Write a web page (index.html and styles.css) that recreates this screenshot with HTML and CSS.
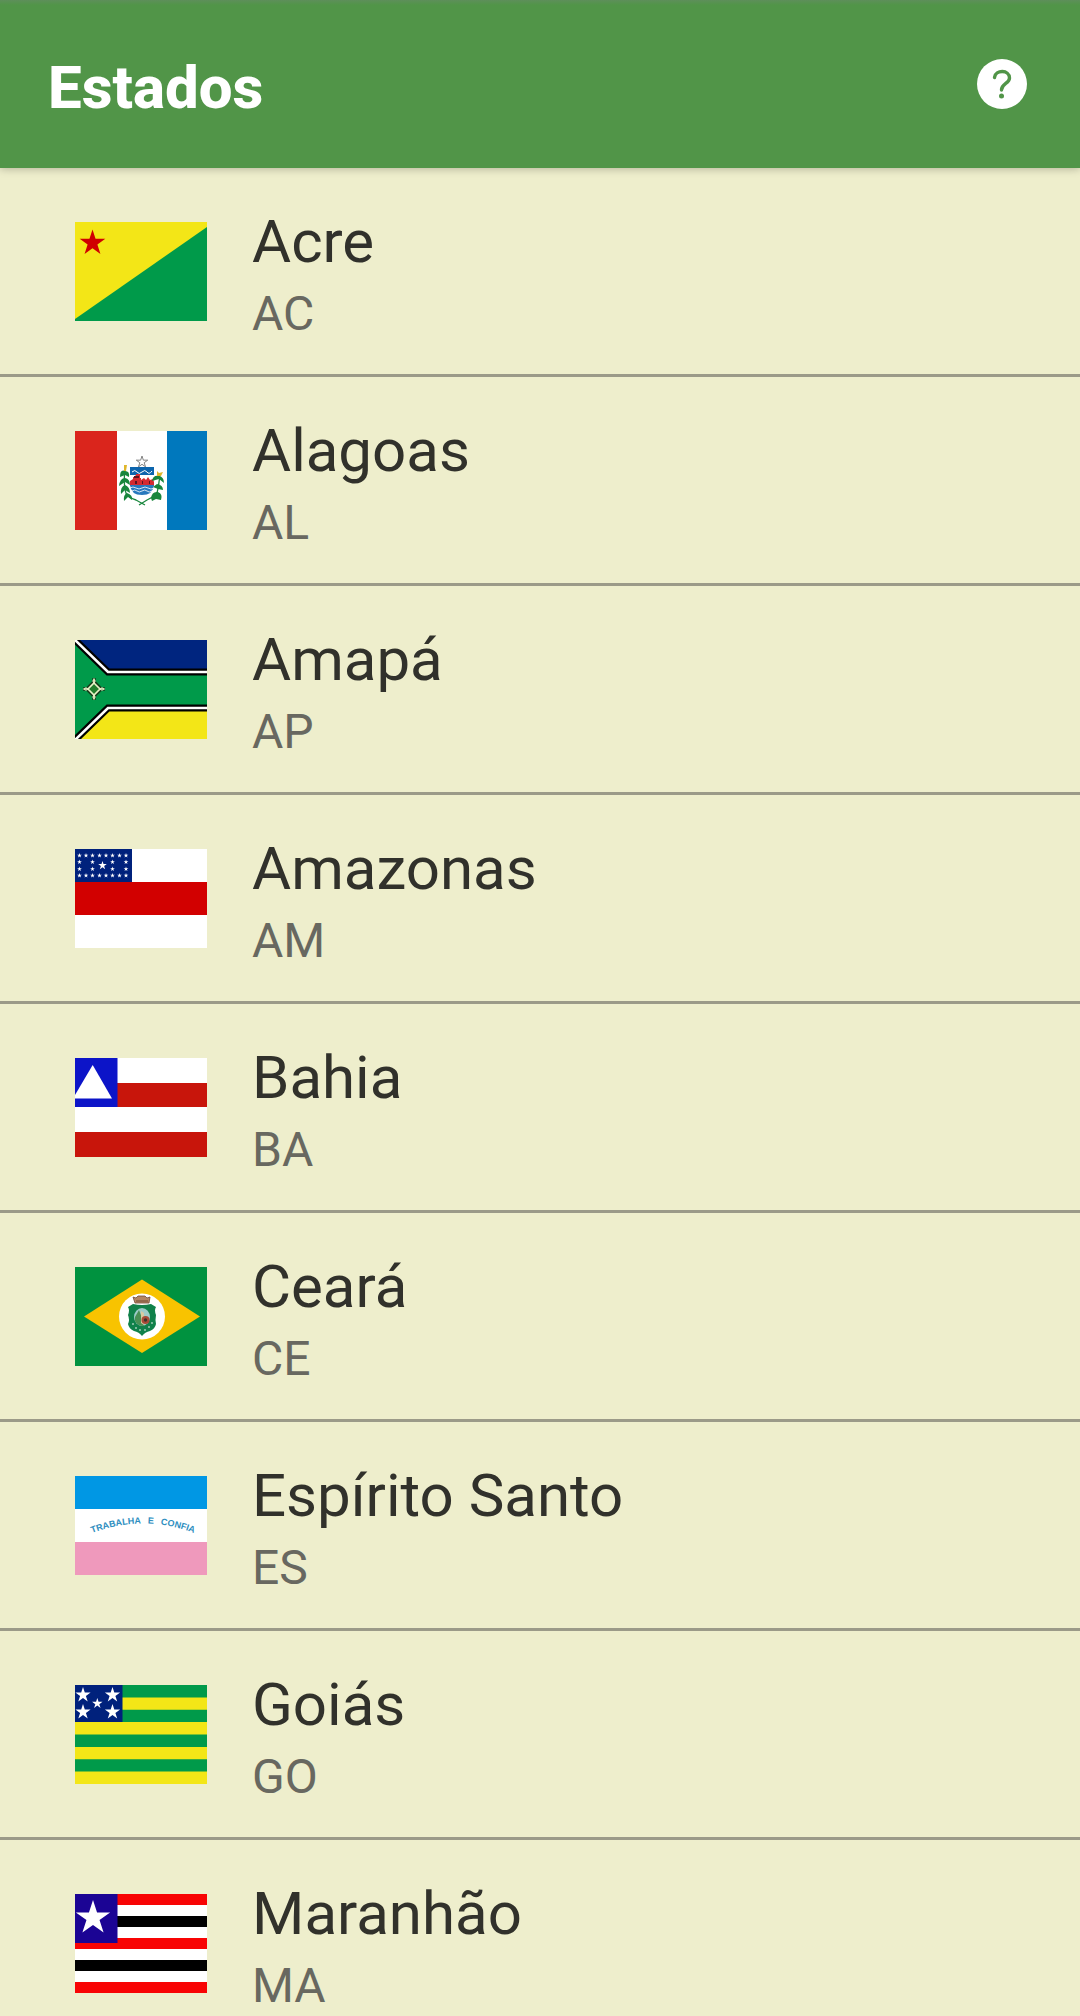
FILE: index.html
```
<!DOCTYPE html>
<html lang="pt-BR">
<head>
<meta charset="utf-8">
<meta name="viewport" content="width=device-width, initial-scale=1">
<title>Estados</title>
<link rel="stylesheet" href="styles.css">
</head>
<body>
<svg class="defs" aria-hidden="true">
  <symbol id="star" viewBox="-10 -10 20 20" overflow="visible">
    <path d="M0-10 2.25-3.09H9.51L3.63 1.18 5.88 8.09 0 3.82-5.88 8.09-3.63 1.18-9.51-3.09H-2.25Z"/>
  </symbol>
</svg>

<header class="app-bar">
  <h1 class="app-title">Estados</h1>
  <button class="help" type="button" aria-label="Ajuda">
    <svg class="help-icon" viewBox="0 0 50 50" aria-hidden="true">
      <circle cx="25" cy="25" r="25" fill="#fff"/>
      <path d="M17.500 18.500C18.500 10.500 32.500 10.500 32.500 19C32.500 24.500 24.500 24.500 24.500 31" fill="none" stroke="#519548" stroke-width="3.400" stroke-linecap="round"/>
      <circle cx="24.500" cy="37" r="2.500" fill="#519548"/>
    </svg>
  </button>
</header>

<main>
<ul class="states">
  <li><a class="state" href="#ac">
    <svg class="flag" viewBox="0 0 132 99" aria-hidden="true">
      <path fill="#f3e617" d="M0 0h132v99H0z"/>
      <path fill="#009a4a" d="M0 97 132 5v94H0z"/>
      <use href="#star" x="4" y="7.500" width="27" height="27" fill="#d00000"/>
    </svg>
    <span class="text"><span class="name">Acre</span><span class="code">AC</span></span>
  </a></li>

  <li><a class="state" href="#al">
    <svg class="flag" viewBox="0 0 132 99" aria-hidden="true">
      <path fill="#fff" d="M0 0h132v99H0z"/>
      <path fill="#da251c" d="M0 0h42v99H0z"/>
      <path fill="#0078bd" d="M92 0h40v99H92z"/>
      <use href="#star" x="61" y="25" width="12" height="12" fill="#fff" stroke="#777" stroke-width="1.500"/>
      <path fill="#0d65ad" d="M55 36h24v8H55z"/>
      <path stroke="#fff" fill="none" d="M57 41q3-3 5 0t5 0 5 0 5-1"/>
      <path fill="#d42a30" d="M55 53v-3l3-2v-2h2v-1l1-1v-1h4v4h1v2l3-2 2 2 2-3 2 3 3-1 1 3v4H55z"/>
      <path fill="#5b1420" d="M59 45h5v2h-5zM60 50h2v3h-2zM67 50h1v3h-1zM74 50h1v3h-1z"/>
      <path fill="#2878bd" d="M55 54h24q-1 10-12 10T55 54z"/>
      <path stroke="#fff" stroke-width=".8" fill="none" d="M55 57q3-2 6 0t6 0 6 0 6 0M57 60q3-2 5 0t5 0 5 0 5 0"/>
      <path stroke="#18863c" stroke-width="1.300" fill="none" d="M50 36q-2 22 2 28 5 4 9 5l9 5M85 42q-1 12-3 20-5 5-10 7l-8 5"/>
      <path fill="#18863c" d="M50 40q-5-2-5 6l5-2 4 2q1-6-4-6zM50 47q-5 0-6 8l6-4 5 3q0-6-5-7zM50 54q-5 2-4 9l4-4 5 3q0-6-5-8zM52 62q-4 2-3 8l4-4 4 3q1-5-5-7zM84 45q-6-1-7 5l7-2 5 4q0-6-5-7zM82 53q6 1 6 6l-5-1-5-2zM76 67q1-7 7-6 5 2 3 8l-5-1-4 2z"/>
      <path fill="#e0b62b" d="M49 34h3l-1 6h-2zM82 40l2 2 4-1-2 4-4 0z"/>
    </svg>
    <span class="text"><span class="name">Alagoas</span><span class="code">AL</span></span>
  </a></li>

  <li><a class="state" href="#ap">
    <svg class="flag" viewBox="0 0 132 99" aria-hidden="true">
      <path fill="#009a4a" d="M0 0h132v99H0z"/>
      <path fill="#00257f" d="M0 0h132v32H33z"/>
      <path fill="#f3e617" d="M3 99 33 69h99v30z"/>
      <g fill="none">
        <path stroke="#000" stroke-width="7" d="M-1-1 33 32h99M0 100 33 68h99"/>
        <path stroke="#fff" stroke-width="2.600" d="M-1-1 33 32h99M0 100 33 68h99"/>
        <path stroke="#163d1b" stroke-width="3.500" d="m19 42 7 7-7 7-7-7zM19 38v5M19 55v5M8 49h5M25 49h5"/>
        <path stroke="#e8f3c8" stroke-width="1.600" fill="#217d2c" d="m19 43 6 6-6 6-6-6z"/>
        <path stroke="#e8f3c8" stroke-width="1.200" d="m19 43-1-2 1-2 1 2zM19 55l-1 2 1 2 1-2zM13 49l-2-1-2 1 2 1zM25 49l2-1 2 1-2 1z"/>
      </g>
    </svg>
    <span class="text"><span class="name">Amapá</span><span class="code">AP</span></span>
  </a></li>

  <li><a class="state" href="#am">
    <svg class="flag" viewBox="0 0 132 99" aria-hidden="true">
      <path fill="#fff" d="M0 0h132v99H0z"/>
      <path fill="#d20000" d="M0 33h132v33H0z"/>
      <path fill="#00217c" d="M0 0h57v33H0z"/>
      <g fill="#fff">
        <g id="am-row">
          <use href="#star" x="2" y="4" width="5" height="5"/>
          <use href="#star" x="8.500" y="4" width="5" height="5"/>
          <use href="#star" x="15" y="4" width="5" height="5"/>
          <use href="#star" x="22" y="4" width="5" height="5"/>
          <use href="#star" x="28.500" y="4" width="5" height="5"/>
          <use href="#star" x="35" y="4" width="5" height="5"/>
          <use href="#star" x="42" y="4" width="5" height="5"/>
          <use href="#star" x="48.500" y="4" width="5" height="5"/>
        </g>
        <use href="#am-row" y="20"/>
        <g id="am-sides">
          <use href="#star" x="2" y="10.500" width="5" height="5"/>
          <use href="#star" x="15" y="10.500" width="5" height="5"/>
          <use href="#star" x="35" y="10.500" width="5" height="5"/>
          <use href="#star" x="48.500" y="10.500" width="5" height="5"/>
        </g>
        <use href="#am-sides" y="7"/>
        <use href="#star" x="23" y="12" width="9" height="9"/>
      </g>
    </svg>
    <span class="text"><span class="name">Amazonas</span><span class="code">AM</span></span>
  </a></li>

  <li><a class="state" href="#ba">
    <svg class="flag" viewBox="0 0 132 99" aria-hidden="true">
      <path fill="#fff" d="M0 0h132v99H0z"/>
      <path fill="#c8150b" d="M0 25h132v24H0zM0 74h132v25H0z"/>
      <path fill="#0c14c8" d="M0 0h42.500v49H0z"/>
      <path fill="#fff" d="M17.700 7 37 40.500H0V37z"/>
    </svg>
    <span class="text"><span class="name">Bahia</span><span class="code">BA</span></span>
  </a></li>

  <li><a class="state" href="#ce">
    <svg class="flag" viewBox="0 0 132 99" aria-hidden="true">
      <path fill="#00923f" d="M0 0h132v99H0z"/>
      <path fill="#f8c300" d="M9 49.500 67 12.500l58 37L67 86z"/>
      <circle cx="67" cy="49.500" r="23" fill="#fff"/>
      <path fill="#b58561" stroke="#6e4a38" stroke-width=".8" d="M58 30l3 1 2-2h7l2 2 3-1-1 6H60z"/>
      <path stroke="#6e4a38" fill="none" d="M61 34h12"/>
      <path fill="#10814a" d="M58 37q9 2 18 0l5 3q-2 3 0 8-1 5 0 9-1 5-6 7-5 1-8 5-3-4-8-5-5-2-6-7 2-4 0-9 2-5 0-8z"/>
      <ellipse cx="67" cy="50" rx="8" ry="9" fill="#9ecbc8"/>
      <path fill="#4b8f54" d="M60 50l4-7 3 8 2 8q-7 0-9-5z"/>
      <path fill="#d8c9a0" d="M66 44l3 2v12l-3-2z"/>
      <circle cx="70.500" cy="53" r="4" fill="#a84936"/>
      <circle cx="70.500" cy="53" r="1.700" fill="#3f332b"/>
      <g fill="#fff"><circle cx="58" cy="57" r=".8"/><circle cx="61" cy="61" r=".8"/><circle cx="65" cy="63" r=".8"/><circle cx="70" cy="63" r=".8"/><circle cx="74" cy="60" r=".8"/><circle cx="77" cy="56" r=".8"/></g>
    </svg>
    <span class="text"><span class="name">Ceará</span><span class="code">CE</span></span>
  </a></li>

  <li><a class="state" href="#es">
    <svg class="flag" viewBox="0 0 132 99" aria-hidden="true">
      <path fill="#fff" d="M0 0h132v99H0z"/>
      <path fill="#0097e4" d="M0 0h132v33H0z"/>
      <path fill="#ef99bc" d="M0 66h132v33H0z"/>
      <path id="motto-arc" fill="none" d="M8 61A140 140 0 0 1 128 61"/>
      <text class="motto"><textPath href="#motto-arc" startOffset="50%">TRABALHA&#160;&#8201; E&#160;&#8201; CONFIA</textPath></text>
    </svg>
    <span class="text"><span class="name">Espírito Santo</span><span class="code">ES</span></span>
  </a></li>

  <li><a class="state" href="#go">
    <svg class="flag" viewBox="0 0 132 99" aria-hidden="true">
      <path fill="#f3e617" d="M0 0h132v99H0z"/>
      <path fill="#009a4a" d="M0 0h132v12.400H0zM0 24.800h132v12.300H0zM0 49.500h132v12.400H0zM0 74.300h132v12.300H0z"/>
      <path fill="#00217c" d="M0 0h47.500v37H0z"/>
      <g fill="#fff">
        <use href="#star" x="0" y="2" width="16" height="16"/>
        <use href="#star" x="29.500" y="2" width="16" height="16"/>
        <use href="#star" x="16.800" y="13" width="11" height="11"/>
        <use href="#star" x="0" y="19" width="16" height="16"/>
        <use href="#star" x="29.500" y="19" width="16" height="16"/>
      </g>
    </svg>
    <span class="text"><span class="name">Goiás</span><span class="code">GO</span></span>
  </a></li>

  <li><a class="state" href="#ma">
    <svg class="flag" viewBox="0 0 132 99" aria-hidden="true">
      <path fill="#fff" d="M0 0h132v99H0z"/>
      <path fill="#f80404" d="M0 0h132v11H0zM0 44h132v11H0zM0 88h132v11H0z"/>
      <path fill="#000" d="M0 22h132v11H0zM0 66h132v11H0z"/>
      <path fill="#1b0494" d="M0 0h42.500v49H0z"/>
      <use href="#star" x="0" y="6" width="36" height="36" fill="#fff"/>
    </svg>
    <span class="text"><span class="name">Maranhão</span><span class="code">MA</span></span>
  </a></li>
</ul>
</main>
</body>
</html>
```
FILE: styles.css
```
* {
  box-sizing: border-box;
}

body {
  margin: 0;
  height: 100vh;
  display: flex;
  flex-direction: column;
  overflow: hidden;
  background: #eeeecc;
  font-family: Roboto, "Noto Sans", sans-serif;
}

.defs {
  display: none;
}

.app-bar {
  flex: none;
  display: flex;
  align-items: center;
  justify-content: space-between;
  padding: 48px 53px 48px 48px;
  background: linear-gradient(#5e8f5a, #519548 5px);
  box-shadow: 0 1px 8px rgba(0, 0, 0, 0.25);
  z-index: 1;
}

.app-title {
  margin: 0;
  padding-top: 8px;
  line-height: 64px;
  font-size: 60px;
  font-weight: 800;
  color: #fff;
}

.help {
  display: flex;
  padding: 0;
  border: 0;
  background: none;
  cursor: pointer;
}

.help-icon {
  width: 50px;
  height: 50px;
}

main {
  flex: 1;
  min-height: 0;
  overflow-y: auto;
  scrollbar-width: none;
}

.states {
  margin: 0;
  padding: 0;
  list-style: none;
}

.state {
  display: flex;
  align-items: flex-start;
  gap: 45px;
  padding: 39px 48px 32px 75px;
  border-bottom: 3px solid #9b9a88;
  color: #31312b;
  text-decoration: none;
}

.flag {
  flex: none;
  width: 132px;
  height: 99px;
  margin-top: 15px;
  overflow: hidden;
}

.text {
  display: flex;
  flex-direction: column;
  gap: 9px;
}

.name {
  font-size: 60px;
  line-height: 70px;
}

.code {
  font-size: 48px;
  line-height: 56px;
  color: #686860;
}

.motto {
  font: 700 9px "Liberation Sans", sans-serif;
  fill: #2e8ec0;
  text-anchor: middle;
}
```
